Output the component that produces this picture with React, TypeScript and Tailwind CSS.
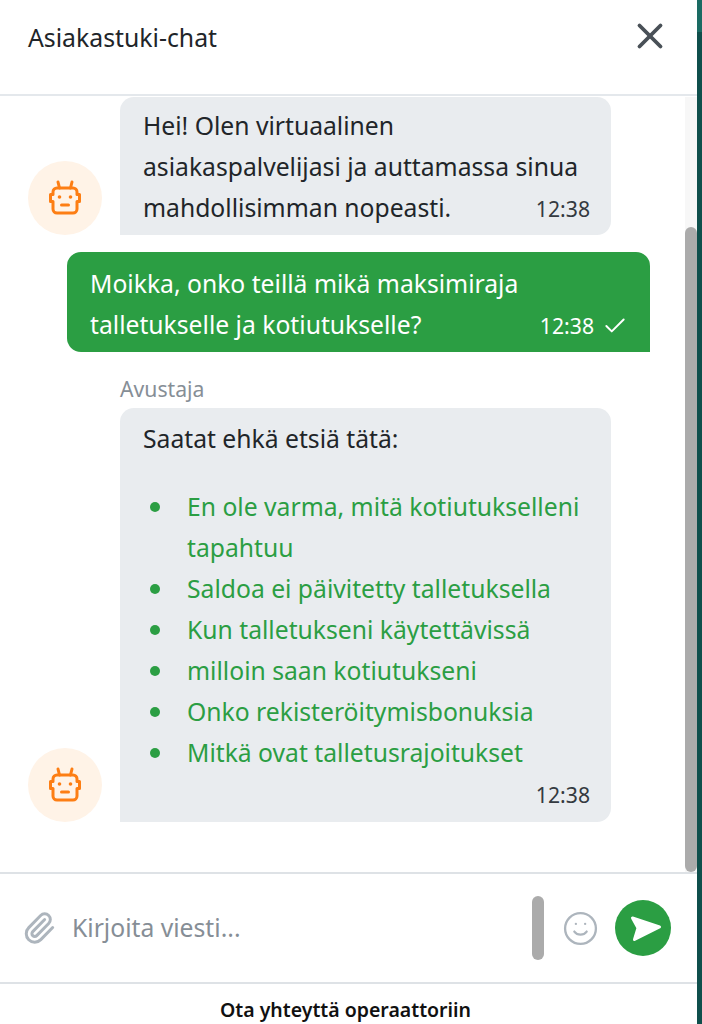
import React from "react";
import { X, Check, Paperclip, Smile } from "lucide-react";

const fontFamily = "font-['Noto_Sans','Open_Sans',sans-serif]";

const BotAvatar = () => (
    <div className="w-[74px] h-[74px] shrink-0 rounded-full bg-[#fff3e7] flex items-center justify-center">
        <svg width="34" height="36" viewBox="0 0 34 36" fill="none" stroke="#fd7e14" strokeWidth="3" strokeLinecap="round" strokeLinejoin="round">
            <path d="M10 2l1.500 6M24 2l-1.500 6" />
            <path d="M9 8h16a4 4 0 0 1 4 4v2.500h2.500v7H29V29a4 4 0 0 1-4 4H9a4 4 0 0 1-4-4v-7.500H2.500v-7H5V12a4 4 0 0 1 4-4z" />
            <circle cx="11.500" cy="17" r="1.800" fill="#fd7e14" stroke="none" />
            <circle cx="22.500" cy="17" r="1.800" fill="#fd7e14" stroke="none" />
            <path d="M13.500 25h7" />
        </svg>
    </div>
);

const SendIcon = () => (
    <svg width="56" height="56" viewBox="0 0 56 56" fill="#fff" stroke="#fff" strokeWidth="3" strokeLinejoin="round">
        <path d="M17.500 18L44.500 27L19.500 39.500L23 28z" />
    </svg>
);

const links = [
    "En ole varma, mitä kotiutukselleni tapahtuu",
    "Saldoa ei päivitetty talletuksella",
    "Kun talletukseni käytettävissä",
    "milloin saan kotiutukseni",
    "Onko rekisteröitymisbonuksia",
    "Mitkä ovat talletusrajoitukset",
];

export default function App() {
    return (
        <div className={`${fontFamily} h-[1024px] w-[702px] flex overflow-hidden`}>
            <div className="w-[697px] h-full bg-white flex flex-col rounded-br-lg">
                {/* Header */}
                <div className="h-[96px] shrink-0 flex items-center justify-between pl-[28px] pr-[26px] pb-[20px] pt-[2px] border-b-2 border-[#e4e8ec]">
                    <h1 className="text-[24.8px] font-normal text-[#212529] -mt-[1px]">Asiakastuki-chat</h1>
                    <X size={42} strokeWidth={2.2} className="text-[#495057] -mt-[4px]" />
                </div>

                {/* Messages */}
                <div className="h-[776px] shrink-0 flex">
                    <div className="flex-1 flex flex-col pt-[1px]">
                        <div className="flex items-end pl-[28px] gap-[18px]">
                            <BotAvatar />
                            <div className="w-[491px] h-[138px] bg-[#e9ecef] rounded-[14px] rounded-bl-none pl-[23px] pr-[21px] pt-[8px] text-[24.7px] leading-[41px] text-[#212529]">
                                <p>Hei! Olen virtuaalinen asiakaspalvelijasi ja auttamassa sinua</p>
                                <div className="flex justify-between items-baseline">
                                    <span>mahdollisimman nopeasti.</span>
                                    <span className="text-[21.2px] text-[#343a40]">12:38</span>
                                </div>
                            </div>
                        </div>

                        <div className="ml-[67px] mt-[17px] w-[583px] h-[100px] bg-[#2b9e43] rounded-[14px] rounded-br-none pl-[23px] pr-[22px] pt-[11px] text-[24.7px] leading-[41px] text-white">
                            <p>Moikka, onko teillä mikä maksimiraja</p>
                            <div className="flex justify-between items-baseline">
                                <span>talletukselle ja kotiutukselle?</span>
                                <span className="flex items-center gap-[8px] text-[21.2px]">12:38 <Check size={26} strokeWidth={1.8} /></span>
                            </div>
                        </div>

                        <div className="flex items-end pl-[28px] gap-[18px] mt-[25px]">
                            <BotAvatar />
                            <div className="w-[491px]">
                                <div className="text-[21.2px] leading-[24px] text-[#868e96] mb-[7px]">Avustaja</div>
                                <div className="h-[414px] bg-[#e9ecef] rounded-[14px] rounded-bl-none pl-[23px] pr-[21px] pt-[10px] text-[24.7px] leading-[41px] text-[#212529]">
                                    <p>Saatat ehkä etsiä tätä:</p>
                                    <ul className="mt-[27px] text-[#2b9e43]">
                                        {links.map(link => (
                                            <li key={link} className="flex">
                                                <span className="w-[44px] shrink-0 pl-[7px] pt-[16px]">
                                                    <span className="block w-[10px] h-[10px] rounded-full bg-[#2b9e43]"></span>
                                                </span>
                                                <span>{link}</span>
                                            </li>
                                        ))}
                                    </ul>
                                    <div className="mt-[1px] text-right text-[21.2px] leading-[41px] text-[#343a40]">12:38</div>
                                </div>
                            </div>
                        </div>
                    </div>

                    {/* Scrollbar */}
                    <div className="w-[12px] shrink-0 mt-[1px] bg-[#f7f7f7] pt-[130px]">
                        <div className="h-[645px] bg-[#ababab] rounded-full"></div>
                    </div>
                </div>

                {/* Input */}
                <div className="h-[110px] shrink-0 flex items-center border-t-2 border-[#dee2e6] pl-[22px] pr-[26px]">
                    <Paperclip size={34} strokeWidth={2.1} className="text-[#adb5bd]" />
                    <span className="ml-[16px] flex-1 text-[24.7px] text-[#868e96]">Kirjoita viesti...</span>
                    <div className="w-[12px] h-[64px] rounded-full bg-[#ababab]"></div>
                    <Smile size={37} strokeWidth={1.5} className="ml-[18px] text-[#adb5bd]" />
                    <div className="ml-[16px] w-[56px] h-[56px] rounded-full bg-[#2b9e43]">
                        <SendIcon />
                    </div>
                </div>

                {/* Footer */}
                <div className="flex-1 flex justify-center border-t-2 border-[#dee2e6] pt-[12px] pr-[6px] text-[19.5px] leading-[28px] font-semibold text-[#111]">
                    Ota yhteyttä operaattoriin
                </div>
            </div>

            {/* Page behind the widget */}
            <div className="flex-1 flex flex-col bg-[#0f4f4c]">
                <div className="h-[32px] bg-[#1a6b63]"></div>
            </div>
        </div>
    );
}
